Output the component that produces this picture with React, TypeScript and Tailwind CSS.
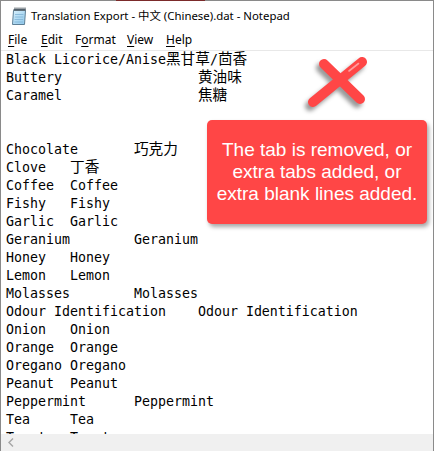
import React from "react";

type Seg = { t: string; cjk?: boolean };

// each line of the file; "\t" is a real tab, CJK parts get their own span
const lines: Seg[][] = [
  [{ t: "Black Licorice/Anise" }, { t: "黑甘草", cjk: true }, { t: "/" }, { t: "茴香", cjk: true }],
  [{ t: "Buttery\t\t\t" }, { t: "黄油味", cjk: true }],
  [{ t: "Caramel\t\t\t" }, { t: "焦糖", cjk: true }],
  [],
  [],
  [{ t: "Chocolate\t" }, { t: "巧克力", cjk: true }],
  [{ t: "Clove\t" }, { t: "丁香", cjk: true }],
  [{ t: "Coffee\tCoffee" }],
  [{ t: "Fishy\tFishy" }],
  [{ t: "Garlic\tGarlic" }],
  [{ t: "Geranium\tGeranium" }],
  [{ t: "Honey\tHoney" }],
  [{ t: "Lemon\tLemon" }],
  [{ t: "Molasses\tMolasses" }],
  [{ t: "Odour Identification\tOdour Identification" }],
  [{ t: "Onion\tOnion" }],
  [{ t: "Orange\tOrange" }],
  [{ t: "Oregano\tOregano" }],
  [{ t: "Peanut\tPeanut" }],
  [{ t: "Peppermint\tPeppermint" }],
  [{ t: "Tea\tTea" }],
  [{ t: "Tomato\tTomato" }],
];

const menus = [
  { pre: "", u: "F", post: "ile", w: "w-[33px]" },
  { pre: "", u: "E", post: "dit", w: "w-[34px]" },
  { pre: "F", u: "o", post: "rmat", w: "w-[52px]" },
  { pre: "", u: "V", post: "iew", w: "w-[39px]" },
  { pre: "", u: "H", post: "elp", w: "w-[40px]" },
];

function NotepadIcon() {
  return (
    <svg width="16" height="18" viewBox="0 0 16 18">
      <defs>
        <linearGradient id="pad" x1="0" y1="0" x2="1" y2="1">
          <stop offset="0" stopColor="#d8f0fc" />
          <stop offset="1" stopColor="#8cc6ea" />
        </linearGradient>
      </defs>
      <path d="M2.5 3.5 L14.5 3.5 L13.5 17.5 L1.5 17.5 Z" fill="url(#pad)" stroke="#5d7f96" strokeWidth="1" />
      <path d="M4 7.5 H12.5 M3.8 10 H12.3 M3.6 12.5 H12.1 M3.4 15 H11.9" stroke="#7fb3d6" strokeWidth="0.8" />
      <rect x="2.5" y="2" width="12" height="2" fill="#6b7b86" />
      {[4, 6, 8, 10, 12, 14].map((x) => (
        <rect key={x} x={x - 0.5} y="0.5" width="1" height="3" fill="#3b4750" />
      ))}
    </svg>
  );
}

export default function App() {
  return (
    <div className="relative flex h-[451px] w-[434px] flex-col overflow-hidden border-x border-[#8a8a8a] bg-white">
      {/* top edge of the window frame */}
      <div className="flex h-px shrink-0">
        <div className="w-[115px] bg-[#8a8a8a]" />
        <div className="w-[89px] bg-[#7b2a2a]" />
        <div className="flex-1 bg-[#8a8a8a]" />
      </div>

      {/* title bar */}
      <div
        className="flex h-[29px] shrink-0 items-center pl-[10px] text-[11.4px] text-black"
        style={{ fontFamily: '"Noto Sans", "Noto Sans CJK SC", sans-serif' }}
      >
        <NotepadIcon />
        <span className="ml-[4px]">Translation Export - 中文 (Chinese).dat - Notepad</span>
      </div>

      {/* menu bar */}
      <div
        className="flex h-[20px] shrink-0 items-center pl-[7px] text-[12px] text-black"
        style={{ fontFamily: '"Noto Sans", sans-serif' }}
      >
        {menus.map((m) => (
          <span key={m.u + m.post} className={m.w}>
            {m.pre}
            <span className="underline underline-offset-2">{m.u}</span>
            {m.post}
          </span>
        ))}
      </div>
      <div className="h-px shrink-0 bg-[#e8e8e8]" />

      {/* text area */}
      <div
        className="h-[383px] shrink-0 overflow-hidden whitespace-pre pl-[5px] text-[13.29px] leading-[18px] text-black [tab-size:8]"
        style={{ fontFamily: '"DejaVu Sans Mono", monospace' }}
      >
        {lines.map((segs, i) => (
          <div key={i} className="h-[18px]">
            {segs.map((s, j) =>
              s.cjk ? (
                <span
                  key={j}
                  className="text-[14.67px] leading-[12px]"
                  style={{ fontFamily: '"Noto Sans CJK SC", sans-serif' }}
                >
                  {s.t}
                </span>
              ) : (
                <span key={j}>{s.t}</span>
              )
            )}
          </div>
        ))}
      </div>

      {/* horizontal scrollbar */}
      <div className="flex h-[17px] shrink-0 items-center bg-[#f0f0f0] pl-[7px]">
        <svg width="6" height="9" viewBox="0 0 6 9">
          <path d="M5 0.5 L1 4.5 L5 8.5" fill="none" stroke="#a6a6a6" strokeWidth="1.4" />
        </svg>
      </div>

      {/* red cross */}
      <svg
        className="absolute left-[300px] top-[50px] [filter:drop-shadow(-3px_4px_2px_rgba(0,0,0,0.4))]"
        width="80"
        height="65"
        viewBox="0 0 80 65"
      >
        <path d="M23 14 L59 49" stroke="#ff4646" strokeWidth="10" strokeLinecap="round" />
        <path d="M61 12 L12 52" stroke="#ff4646" strokeWidth="10" strokeLinecap="round" />
        <path d="M57.5 13.5 L48 21" stroke="#ff9c9c" strokeWidth="1.6" strokeLinecap="round" />
      </svg>

      {/* callout */}
      <div
        className="absolute left-[206px] top-[120px] flex h-[104px] w-[220px] items-center justify-center rounded-[5px] bg-[#ff4646] text-center text-[19px] leading-[22px] text-white shadow-[2px_3px_4px_rgba(0,0,0,0.35)]"
        style={{ fontFamily: '"Liberation Sans", Arial, sans-serif' }}
      >
        The tab is removed, or
        <br />
        extra tabs added, or
        <br />
        extra blank lines added.
      </div>
    </div>
  );
}
